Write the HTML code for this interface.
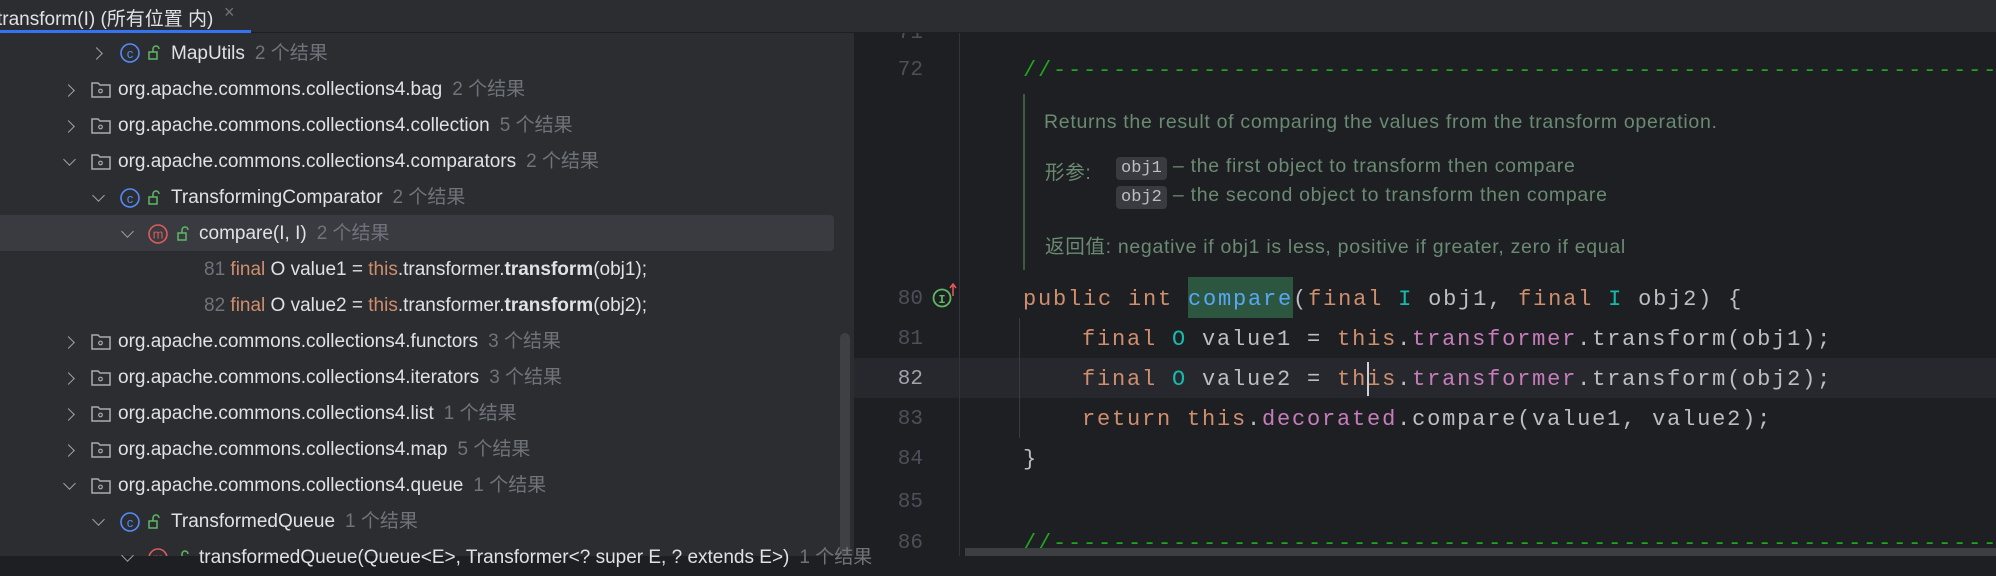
<!DOCTYPE html>
<html><head><meta charset="utf-8"><style>
*{margin:0;padding:0;box-sizing:border-box}
body{width:1996px;height:556px;overflow:hidden;background:#1e1f22;position:relative;font-family:"Liberation Sans","Noto Sans CJK SC",sans-serif}
.abs{position:absolute;white-space:nowrap}
#tabbar{left:0;top:0;width:1996px;height:33px;background:#2b2d30;border-bottom:1px solid #1e1f22;z-index:5}
#left{left:0;top:33px;width:854px;height:523px;background:#2b2d30}
.row{position:absolute;height:36px;line-height:36px;font-size:19px;color:#dfe1e5;white-space:nowrap}
.cnt{color:#6f737a;margin-left:10px}
.chev{position:absolute;width:9px;height:9px;border-right:1.6px solid #9da0a8;border-bottom:1.6px solid #9da0a8}
.cr{transform:rotate(-45deg)}
.cd{transform:rotate(45deg)}
.code{font-family:"Liberation Mono",monospace;font-size:22px;letter-spacing:1.8px;color:#bcbec4;position:absolute;white-space:nowrap;line-height:40px;height:40px}
.ln{position:absolute;font-family:"Liberation Mono",monospace;font-size:21px;color:#4b5059;width:70px;text-align:right;left:853px;line-height:40px}
.k{color:#cf8e6d}.f{color:#c77dbb}.t{color:#16baac}.m{color:#56a8f5}
.doc{color:#6a8a73;font-size:19.5px;letter-spacing:0.7px;position:absolute;white-space:nowrap}
.badge{background:#393b40;color:#bcbec4;border-radius:4px;padding:2px 5px;font-family:"Liberation Mono",monospace;font-size:17px;letter-spacing:0}
.tk{color:#cf8e6d}
</style></head><body>
<div id="tabbar" class="abs"></div>
<div class="abs" style="left:-3px;top:4px;font-size:19px;color:#dfe1e5;z-index:6">transform(I) (所有位置 内)</div>
<div class="abs" style="left:224px;top:2px;font-size:18px;color:#6f737a;z-index:6">×</div>
<div class="abs" style="left:0;top:30px;width:251px;height:3px;background:#3574f0;z-index:6"></div>

<div id="left" class="abs"></div>
<div class="abs" style="left:0;top:215px;width:834px;height:36px;background:#393b40;border-radius:0 4px 4px 0"></div>
<div class="abs" style="left:840px;top:333px;width:10px;height:223px;background:#3e4043;border-radius:5px"></div>

<svg class="abs" style="left:0;top:0" width="854" height="556">
<defs>
<g id="fold"><path d="M1 3 h6 l2 2 h10 v12 h-18 z" fill="none" stroke="#a9abb0" stroke-width="1.5"/><circle cx="9.5" cy="11" r="1.8" fill="none" stroke="#a9abb0" stroke-width="1.2"/></g>
<g id="cls"><circle cx="10" cy="10" r="9" fill="none" stroke="#548af7" stroke-width="1.6"/><text x="10" y="15" font-size="13" fill="#548af7" text-anchor="middle" font-family="Liberation Sans">c</text></g>
<g id="mth"><circle cx="10" cy="10" r="9" fill="none" stroke="#db5c5c" stroke-width="1.6"/><text x="10" y="14.5" font-size="13" fill="#db5c5c" text-anchor="middle" font-family="Liberation Sans">m</text></g>
<g id="lock"><rect x="0" y="6" width="8" height="7" fill="none" stroke="#5fb865" stroke-width="1.5"/><path d="M4 6 V3 a3 3 0 0 1 6 0" fill="none" stroke="#5fb865" stroke-width="1.5"/></g>
</defs>
<use href="#cls" x="120" y="43"/><use href="#lock" x="149" y="46"/>
<use href="#fold" x="91" y="80"/><use href="#fold" x="91" y="116"/><use href="#fold" x="91" y="152"/>
<use href="#cls" x="120" y="188"/><use href="#lock" x="149" y="191"/>
<use href="#mth" x="148" y="224"/><use href="#lock" x="178" y="227"/>
<use href="#fold" x="91" y="332"/><use href="#fold" x="91" y="368"/><use href="#fold" x="91" y="404"/><use href="#fold" x="91" y="440"/><use href="#fold" x="91" y="476"/>
<use href="#cls" x="120" y="512"/><use href="#lock" x="149" y="515"/>
<use href="#mth" x="148" y="548"/><use href="#lock" x="178" y="551"/>
</svg>

<div class="chev cr" style="left:92px;top:49px"></div>
<div class="chev cr" style="left:64px;top:86px"></div>
<div class="chev cr" style="left:64px;top:122px"></div>
<div class="chev cd" style="left:65px;top:155px"></div>
<div class="chev cd" style="left:94px;top:191px"></div>
<div class="chev cd" style="left:123px;top:227px"></div>
<div class="chev cr" style="left:64px;top:338px"></div>
<div class="chev cr" style="left:64px;top:374px"></div>
<div class="chev cr" style="left:64px;top:410px"></div>
<div class="chev cr" style="left:64px;top:446px"></div>
<div class="chev cd" style="left:65px;top:479px"></div>
<div class="chev cd" style="left:94px;top:515px"></div>
<div class="chev cd" style="left:123px;top:551px"></div>

<div class="row" style="left:171px;top:36px">MapUtils<span class="cnt">2 个结果</span></div>
<div class="row" style="left:118px;top:72px">org.apache.commons.collections4.bag<span class="cnt">2 个结果</span></div>
<div class="row" style="left:118px;top:108px">org.apache.commons.collections4.collection<span class="cnt">5 个结果</span></div>
<div class="row" style="left:118px;top:144px">org.apache.commons.collections4.comparators<span class="cnt">2 个结果</span></div>
<div class="row" style="left:171px;top:180px">TransformingComparator<span class="cnt">2 个结果</span></div>
<div class="row" style="left:199px;top:216px">compare(I, I)<span class="cnt">2 个结果</span></div>
<div class="row" style="left:204px;top:252px"><span style="color:#6f737a">81</span> <span class="tk">final</span> O value1 = <span class="tk">this</span>.transformer.<b>transform</b>(obj1);</div>
<div class="row" style="left:204px;top:288px"><span style="color:#6f737a">82</span> <span class="tk">final</span> O value2 = <span class="tk">this</span>.transformer.<b>transform</b>(obj2);</div>
<div class="row" style="left:118px;top:324px">org.apache.commons.collections4.functors<span class="cnt">3 个结果</span></div>
<div class="row" style="left:118px;top:360px">org.apache.commons.collections4.iterators<span class="cnt">3 个结果</span></div>
<div class="row" style="left:118px;top:396px">org.apache.commons.collections4.list<span class="cnt">1 个结果</span></div>
<div class="row" style="left:118px;top:432px">org.apache.commons.collections4.map<span class="cnt">5 个结果</span></div>
<div class="row" style="left:118px;top:468px">org.apache.commons.collections4.queue<span class="cnt">1 个结果</span></div>
<div class="row" style="left:171px;top:504px">TransformedQueue<span class="cnt">1 个结果</span></div>
<div class="row" style="left:199px;top:540px">transformedQueue(Queue&lt;E&gt;, Transformer&lt;? super E, ? extends E&gt;)<span class="cnt">1 个结果</span></div>

<!-- editor -->
<div class="abs" style="left:854px;top:358px;width:1142px;height:40px;background:#26282e"></div>
<div class="abs" style="left:959px;top:33px;width:1px;height:523px;background:#313438"></div>
<div class="abs" style="left:1019px;top:318px;width:1px;height:120px;background:#393b40"></div>
<div class="ln" style="top:14px">71</div>
<div class="ln" style="top:51px">72</div>
<div class="ln" style="top:280px">80</div>
<div class="ln" style="top:320px">81</div>
<div class="ln" style="top:360px;color:#a1a3ab">82</div>
<div class="ln" style="top:400px">83</div>
<div class="ln" style="top:440px">84</div>
<div class="ln" style="top:483px">85</div>
<div class="ln" style="top:524px">86</div>

<div class="code" style="left:1023px;top:51px;color:#1fa51f">//--------------------------------------------------------------------</div>
<div class="abs" style="left:1023px;top:94px;width:2px;height:176px;background:#3d5a45"></div>
<div class="doc" style="left:1044px;top:111px">Returns the result of comparing the values from the transform operation.</div>
<div class="doc" style="left:1045px;top:156px">形参:</div>
<div class="doc" style="left:1116px;top:155px"><span class="badge">obj1</span> – the first object to transform then compare</div>
<div class="doc" style="left:1116px;top:184px"><span class="badge">obj2</span> – the second object to transform then compare</div>
<div class="doc" style="left:1045px;top:230px">返回值: negative if obj1 is less, positive if greater, zero if equal</div>

<div class="abs" style="left:1188px;top:277px;width:105px;height:41px;background:#2d5641"></div>
<svg class="abs" style="left:930px;top:282px" width="30" height="30"><circle cx="12" cy="16" r="8.5" fill="none" stroke="#5fb865" stroke-width="1.8"/><text x="12" y="21" font-size="12" fill="#5fb865" text-anchor="middle" font-family="Liberation Mono" font-weight="bold">I</text><path d="M23 14 V3 M20 6 L23 2 L26 6" fill="none" stroke="#e55b5b" stroke-width="1.5"/></svg>

<div class="code" style="left:1023px;top:280px"><span class="k">public int </span><span class="m">compare</span>(<span class="k">final </span><span class="t">I</span> obj1, <span class="k">final </span><span class="t">I</span> obj2) {</div>
<div class="code" style="left:1082px;top:320px"><span class="k">final </span><span class="t">O</span> value1 = <span class="k">this</span>.<span class="f">transformer</span>.transform(obj1);</div>
<div class="code" style="left:1082px;top:360px"><span class="k">final </span><span class="t">O</span> value2 = <span class="k">this</span>.<span class="f">transformer</span>.transform(obj2);</div>
<div class="abs" style="left:1367px;top:362px;width:2px;height:34px;background:#cfd1d6"></div>
<div class="code" style="left:1082px;top:400px"><span class="k">return this</span>.<span class="f">decorated</span>.compare(value1, value2);</div>
<div class="code" style="left:1023px;top:440px">}</div>
<div class="code" style="left:1023px;top:524px;color:#1fa51f">//--------------------------------------------------------------------</div>
<div class="abs" style="left:965px;top:548px;width:1031px;height:8px;background:#3c3e42"></div>
</body></html>
